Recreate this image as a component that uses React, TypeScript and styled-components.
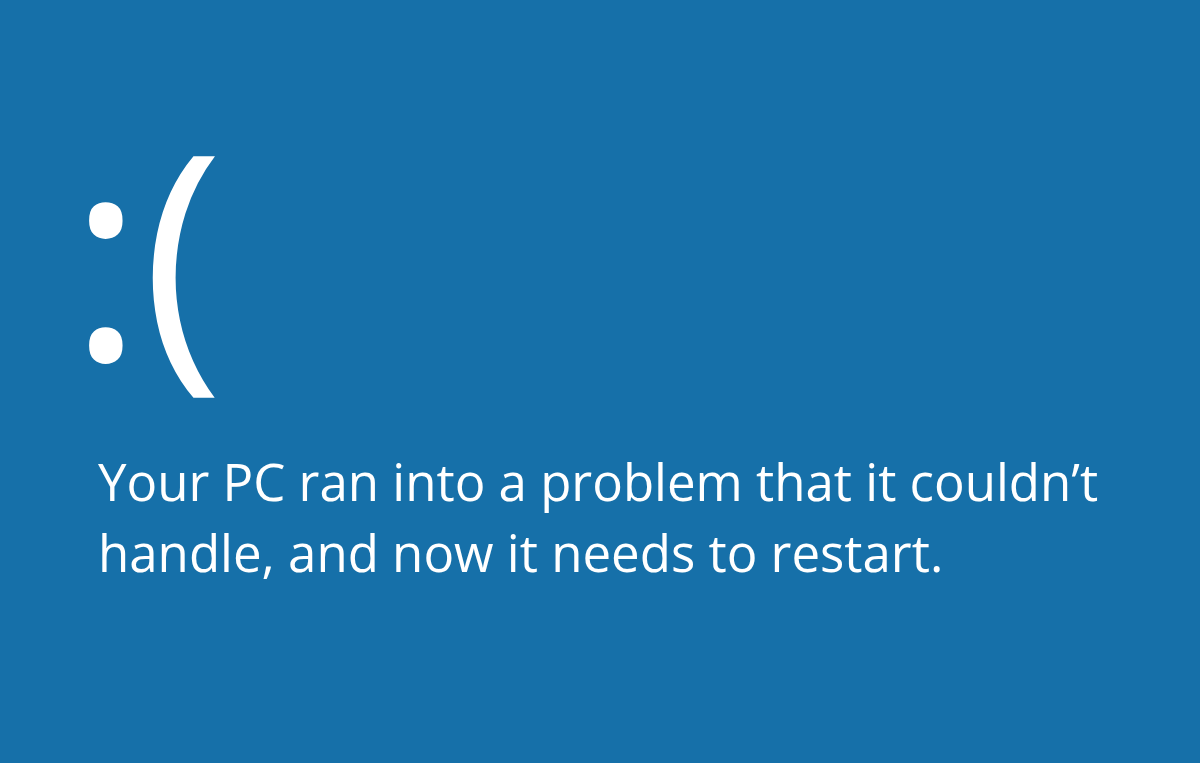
import React from "react";
import styled, {createGlobalStyle} from "styled-components";

const GlobalStyle = createGlobalStyle`
  html, body {
    margin: 0;
    padding: 0;
    background: #1670a9;
  }
`;

const Screen = styled.div`
  width: 1200px;
  height: 763px;
  box-sizing: border-box;
  background: #1670a9;
  color: #ffffff;
  padding: 104px 0 0 68px;
  overflow: hidden;
  font-family: "Open Sans", "Noto Sans", sans-serif;
`;

const Face = styled.div`
  display: flex;
  align-items: flex-start;
  height: 342px;
`;

const Colon = styled.span`
  font-size: 288px;
  font-weight: 400;
  line-height: 1;
  letter-spacing: -2px;
`;

const Paren = styled.span`
  margin-top: 4px;
  font-size: 277px;
  font-weight: 500;
  line-height: 1;
`;

const Message = styled.p`
  margin: 0 0 0 30px;
  font-size: 51px;
  font-weight: 400;
  line-height: 71px;
  max-width: 1060px;
`;

export default function App() {
    return (
        <>
            <GlobalStyle/>
            <Screen>
                <Face>
                    <Colon>:</Colon>
                    <Paren>(</Paren>
                </Face>
                <Message>
                    Your PC ran into a problem that it couldn’t handle, and now it needs to restart.
                </Message>
            </Screen>
        </>
    );
}
